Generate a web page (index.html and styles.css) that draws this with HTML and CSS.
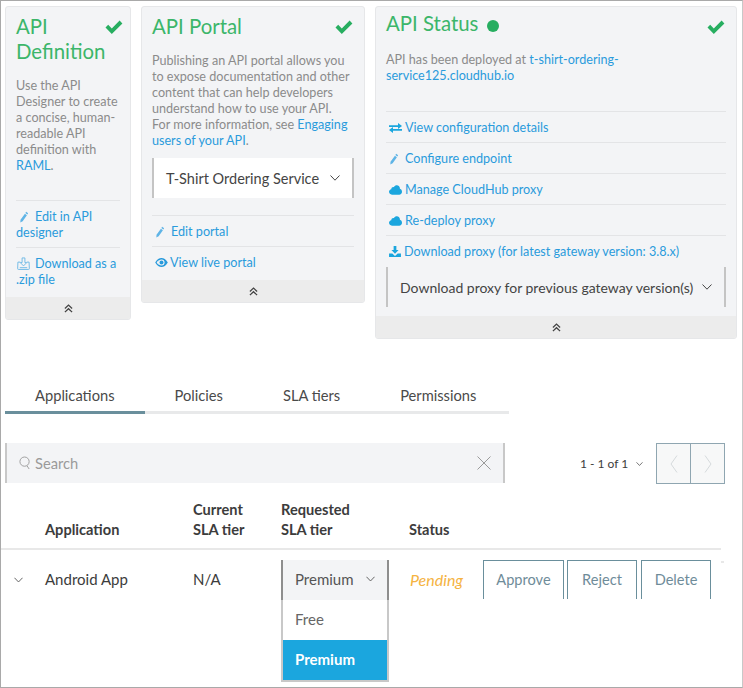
FILE: index.html
```html
<!DOCTYPE html>
<html lang="en">

<head>
    <meta charset="UTF-8">
    <meta name="viewport" content="width=device-width, initial-scale=1.0">
    <title>API Administration</title>
    <link rel="stylesheet" href="styles.css">
</head>

<body>
    <svg class="sprites" width="0" height="0">
        <symbol id="i-check" viewBox="0 0 18 14"><path d="M0.5 7.5 L3.2 4.8 L6.8 8.4 L14.6 0.6 L17.4 3.4 L6.8 14 Z"/></symbol>
        <symbol id="i-pencil" viewBox="0 0 12 14"><path d="M8.6 0.6 L11 2.4 L10 4 L7.6 2.2 Z M7.1 3 L9.5 4.8 L4.4 12 L1.6 13.6 L1.8 10.4 Z"/></symbol>
        <symbol id="i-tray" viewBox="0 0 14 14"><path fill="none" stroke="currentColor" d="M3.5 5.5 H1 L0.7 12.5 Q0.7 13.4 1.6 13.4 H12.4 Q13.3 13.4 13.3 12.5 L13 5.5 H10.5 M5.5 1 H8.5 V6 H10.5 L7 9.6 L3.5 6 H5.5 Z M3 11.5 H11"/></symbol>
        <symbol id="i-eye" viewBox="0 0 14 10"><path fill-rule="evenodd" d="M0 5 C2 1.4 4.4 0 7 0 C9.6 0 12 1.4 14 5 C12 8.6 9.6 10 7 10 C4.4 10 2 8.6 0 5 Z M7 1.6 A3.4 3.4 0 1 0 7 8.4 A3.4 3.4 0 1 0 7 1.6 Z M1.6 5 C2.4 6.2 3.2 7 4.2 7.7 C3.4 6.6 3.4 3.4 4.2 2.3 C3.2 3 2.4 3.8 1.6 5 Z"/><circle cx="7" cy="5" r="2.2"/></symbol>
        <symbol id="i-exchange" viewBox="0 0 13 10"><path d="M0 2.2 H9 V0 L13 3 L9 6 V3.9 H0 Z M13 6.1 H4 V4 L0 7 L4 10 V7.8 H13 Z"/></symbol>
        <symbol id="i-cloud" viewBox="0 0 14 10"><path d="M3.2 10 C1.4 10 0 8.7 0 7 C0 5.5 1 4.4 2.4 4.1 C2.6 2.4 4 1.6 5.2 2 C6 0.7 7.2 0 8.4 0 C10.4 0 11.8 1.5 11.8 3.6 C13.1 4 14 5.3 14 6.8 C14 8.6 12.7 10 11 10 Z"/></symbol>
        <symbol id="i-download" viewBox="0 0 13 12"><path d="M5 0 H8 V4.4 H10.4 L6.5 8.4 L2.6 4.4 H5 Z M0 8.2 H3.6 L6.5 11 L9.4 8.2 H13 V12 H0 Z"/></symbol>
        <symbol id="i-up" viewBox="0 0 10 10"><path fill="none" stroke="currentColor" stroke-width="1.4" d="M1 5 L5 1.2 L9 5 M1 9 L5 5.2 L9 9"/></symbol>
        <symbol id="i-down" viewBox="0 0 10 6"><path fill="none" stroke="currentColor" d="M0.5 0.5 L5 5.2 L9.5 0.5"/></symbol>
        <symbol id="i-left" viewBox="0 0 8 18"><path fill="none" stroke="currentColor" d="M7 0.5 L1 9 L7 17.5"/></symbol>
        <symbol id="i-right" viewBox="0 0 8 18"><path fill="none" stroke="currentColor" d="M1 0.5 L7 9 L1 17.5"/></symbol>
        <symbol id="i-search" viewBox="0 0 13 15"><circle cx="6" cy="6" r="5" fill="none" stroke="currentColor"/><path fill="none" stroke="currentColor" d="M8.6 10.4 L11 14"/></symbol>
        <symbol id="i-close" viewBox="0 0 14 14"><path fill="none" stroke="currentColor" d="M0.5 0.5 L13.5 13.5 M13.5 0.5 L0.5 13.5"/></symbol>
    </svg>

    <div class="page">
        <div class="cards">
            <section class="card card-definition">
                <div class="card-body">
                    <div class="card-head">
                        <h2>API Definition</h2>
                        <svg class="done"><use href="#i-check"/></svg>
                    </div>
                    <p class="intro">Use the API Designer to create a concise, human-readable API definition with <a href="#">RAML</a>.</p>
                    <ul class="links">
                        <li><a href="#"><svg class="ico ico-pencil"><use href="#i-pencil"/></svg>Edit in API designer</a></li>
                        <li><a href="#"><svg class="ico ico-tray"><use href="#i-tray"/></svg>Download as a .zip file</a></li>
                    </ul>
                </div>
                <div class="card-foot"><svg><use href="#i-up"/></svg></div>
            </section>

            <section class="card card-portal">
                <div class="card-body">
                    <div class="card-head">
                        <h2>API Portal</h2>
                        <svg class="done"><use href="#i-check"/></svg>
                    </div>
                    <p class="intro">Publishing an API portal allows you to expose documentation and other content that can help developers understand how to use your API.<br>For more information, see <a href="#">Engaging users of your API</a>.</p>
                    <div class="picker picker-white">
                        <span>T-Shirt Ordering Service</span>
                        <svg class="caret"><use href="#i-down"/></svg>
                    </div>
                    <ul class="links">
                        <li><a href="#"><svg class="ico ico-pencil"><use href="#i-pencil"/></svg>Edit portal</a></li>
                        <li><a href="#"><svg class="ico ico-eye"><use href="#i-eye"/></svg>View live portal</a></li>
                    </ul>
                </div>
                <div class="card-foot"><svg><use href="#i-up"/></svg></div>
            </section>

            <section class="card card-status">
                <div class="card-body">
                    <div class="card-head">
                        <h2>API Status <span class="live"></span></h2>
                        <svg class="done"><use href="#i-check"/></svg>
                    </div>
                    <p class="intro">API has been deployed at <a href="#">t-shirt-ordering-<br>service125.cloudhub.io</a></p>
                    <ul class="links">
                        <li><a href="#"><svg class="ico ico-solid"><use href="#i-exchange"/></svg>View configuration details</a></li>
                        <li><a href="#"><svg class="ico ico-pencil"><use href="#i-pencil"/></svg>Configure endpoint</a></li>
                        <li><a href="#"><svg class="ico ico-solid"><use href="#i-cloud"/></svg>Manage CloudHub proxy</a></li>
                        <li><a href="#"><svg class="ico ico-solid"><use href="#i-cloud"/></svg>Re-deploy proxy</a></li>
                        <li><a href="#"><svg class="ico ico-dl"><use href="#i-download"/></svg>Download proxy (for latest gateway version: 3.8.x)</a></li>
                    </ul>
                    <div class="picker">
                        <span>Download proxy for previous gateway version(s)</span>
                        <svg class="caret"><use href="#i-down"/></svg>
                    </div>
                </div>
                <div class="card-foot"><svg><use href="#i-up"/></svg></div>
            </section>
        </div>

        <nav class="tabs">
            <a class="tab active" href="#">Applications</a>
            <a class="tab" href="#">Policies</a>
            <a class="tab" href="#">SLA tiers</a>
            <a class="tab" href="#">Permissions</a>
        </nav>

        <div class="toolbar">
            <div class="search">
                <svg class="search-ico"><use href="#i-search"/></svg>
                <span class="search-text">Search</span>
                <svg class="search-clear"><use href="#i-close"/></svg>
            </div>
            <div class="pager">
                <span class="count">1 - 1 of 1</span>
                <svg class="count-caret"><use href="#i-down"/></svg>
                <div class="pager-btns">
                    <button><svg><use href="#i-left"/></svg></button>
                    <button><svg><use href="#i-right"/></svg></button>
                </div>
            </div>
        </div>

        <div class="table">
            <div class="row row-head">
                <div></div>
                <div>Application</div>
                <div>Current<br>SLA tier</div>
                <div>Requested<br>SLA tier</div>
                <div>Status</div>
            </div>
            <div class="row row-data">
                <div class="expand"><svg><use href="#i-down"/></svg></div>
                <div class="cell">Android App</div>
                <div class="cell">N/A</div>
                <div class="tier">
                    <div class="tier-value">
                        <span>Premium</span>
                        <svg><use href="#i-down"/></svg>
                    </div>
                    <ul class="tier-menu">
                        <li>Free</li>
                        <li class="selected">Premium</li>
                    </ul>
                </div>
                <div class="cell pending">Pending</div>
                <div class="actions">
                    <button class="btn-approve">Approve</button>
                    <button>Reject</button>
                    <button class="btn-delete">Delete</button>
                </div>
            </div>
            <span class="speck"></span>
        </div>
    </div>
</body>

</html>
```

FILE: styles.css
```css
* {
    box-sizing: border-box;
}

body {
    margin: 0;
    font-family: Lato, "Open Sans", sans-serif;
    font-size: 12.6px;
    color: #3c3c3c;
    background: #fff;
}

a {
    color: #2a9bdc;
    text-decoration: none;
}

ul {
    list-style: none;
    margin: 0;
    padding: 0;
}

.sprites {
    position: absolute;
}

.page {
    height: 688px;
    overflow: hidden;
    border: 1px solid #a9a9a9;
    border-right-color: #c8c8c8;
    padding: 5px 0 0 4px;
}

/* top cards */
.cards {
    display: flex;
    align-items: flex-start;
    gap: 10px;
}

.card {
    background: #f3f4f6;
    border: 1px solid #e6e7e9;
    border-radius: 3px;
    overflow: hidden;
}

.card-definition {
    width: 126px;
}

.card-portal {
    width: 224px;
}

.card-status {
    width: 362px;
}

.card-body {
    padding: 7px 10px 0;
}

.card-head {
    display: flex;
    justify-content: space-between;
    align-items: flex-start;
}

.card-head h2 {
    margin: 0;
    font-size: 20.4px;
    font-weight: 400;
    line-height: 25px;
    color: #3cb66a;
}

.done {
    width: 18px;
    height: 14px;
    margin-top: 6px;
    margin-right: 1px;
    fill: #27ae60;
    flex: none;
}

.live {
    display: inline-block;
    width: 12px;
    height: 12px;
    margin-left: 3px;
    border-radius: 50%;
    background: #27ae60;
}

.intro {
    margin: 14px 0 0;
    line-height: 16px;
    color: #8b8b8b;
}

.links li {
    border-top: 1px solid #e3e4e6;
    padding: 8px 0 6px;
    line-height: 16px;
}

.ico {
    display: inline-block;
    vertical-align: -2px;
    fill: currentColor;
    color: #2a9bdc;
}

.ico-pencil {
    width: 10px;
    height: 12px;
    margin: 0 6px 0 3px;
    color: #5fb4e6;
}

.ico-tray {
    width: 13px;
    height: 13px;
    margin: 0 5px 0 1px;
    color: #6db9e6;
    fill: none;
}

.ico-eye {
    width: 13px;
    height: 9px;
    margin: 0 2px 0 3px;
    vertical-align: 0;
}

.ico-solid {
    width: 13px;
    height: 10px;
    margin: 0 3px 0 3px;
    vertical-align: -1px;
    color: #1ba6de;
}

.ico-dl {
    width: 12px;
    height: 11px;
    margin: 0 3px 0 3px;
    vertical-align: -1px;
    color: #1ba6de;
}

.card-definition .intro {
    min-height: 96px;
    margin-bottom: 26px;
}

.card-definition .links li:last-child {
    padding-bottom: 9px;
}

.card-portal .links {
    margin-top: 17px;
}

.card-portal .links li:last-child {
    padding-bottom: 9px;
}

.card-status .card-head h2 {
    margin-top: -3px;
}

.card-status .card-head h2 .live {
    transform: translateY(1px);
}

.card-status .intro {
    margin: 16px 0 27px;
}

.card-status .links li:last-child {
    padding-bottom: 7px;
}

.picker {
    display: flex;
    justify-content: space-between;
    align-items: center;
    height: 40px;
    padding: 0 12px 0 12px;
    border-left: 2px solid #c4c4c4;
    border-right: 2px solid #c4c4c4;
    font-size: 14px;
    color: #444;
}

.picker-white {
    background: #fff;
    margin-top: 9px;
    font-size: 14.5px;
}

.caret {
    width: 10px;
    height: 6px;
    flex: none;
}

.card-status .picker {
    margin-bottom: 9px;
}

.card-foot {
    display: flex;
    justify-content: center;
    align-items: center;
    height: 22px;
    background: #ececec;
    color: #444;
}

.card-foot svg {
    width: 9px;
    height: 9px;
}

/* tabs */
.tabs {
    display: flex;
    width: 504px;
    height: 30px;
    margin-top: 45px;
    border-bottom: 3px solid #e8e9ea;
}

.tab {
    height: 30px;
    padding: 1px 30px 0;
    font-size: 14.7px;
    line-height: 21px;
    color: #4a4a4a;
}

.tab.active {
    border-bottom: 3px solid #6a8f9c;
}

/* search and pager */
.toolbar {
    display: flex;
    align-items: flex-start;
    margin-top: 29px;
}

.search {
    display: flex;
    align-items: center;
    width: 500px;
    height: 40px;
    padding: 0 12px 0 12px;
    background: #f3f4f6;
    border-left: 2px solid #c8c8c8;
    border-right: 2px solid #c8c8c8;
    color: #9a9a9a;
}

.search-ico {
    width: 12px;
    height: 14px;
    margin-right: 4px;
}

.search-text {
    flex: 1;
    font-size: 14.7px;
}

.search-clear {
    width: 14px;
    height: 14px;
}

.pager {
    display: flex;
    align-items: center;
    height: 41px;
    margin-left: 75px;
}

.count {
    font-size: 12px;
    color: #3c3c3c;
}

.count-caret {
    width: 7px;
    height: 4px;
    margin: 0 13px 0 8px;
    color: #333;
}

.pager-btns {
    display: flex;
    width: 69px;
    height: 41px;
    border: 1px solid #8fa6b1;
}

.pager-btns button {
    flex: 1;
    display: flex;
    justify-content: center;
    align-items: center;
    padding: 0;
    background: #f7f8f8;
    border: 0;
    color: #d5dadc;
}

.pager-btns button + button {
    border-left: 1px solid #8fa6b1;
}

.pager-btns svg {
    width: 8px;
    height: 18px;
}

/* table */
.table {
    position: relative;
    width: 721px;
    margin: 15px 0 0 -5px;
}

.row {
    display: grid;
    grid-template-columns: 45px 148px 88px 128px 1fr;
}

.row-head {
    align-items: end;
    padding-bottom: 8px;
    border-bottom: 2px solid #e8e8e8;
    box-sizing: content-box;
    font-weight: 700;
    font-size: 14.6px;
    line-height: 20px;
    color: #3c3c3c;
    height: 41px;
}

.row-data {
    grid-template-columns: 45px 148px 88px 128px 74px 1fr;
    align-items: center;
    height: 40px;
    margin-top: 10px;
    font-size: 15px;
}

.cell {
    padding-bottom: 2px;
}

.expand svg {
    display: block;
    width: 9px;
    height: 6px;
    margin-left: 14px;
    color: #555;
}

.tier {
    position: relative;
    width: 108px;
    height: 40px;
}

.tier-value {
    display: flex;
    justify-content: space-between;
    align-items: center;
    height: 40px;
    padding: 0 12px 2px 12px;
    background: #f3f4f6;
    border-left: 2px solid #8e8e8e;
    border-right: 2px solid #8e8e8e;
    color: #555;
}

.tier-value svg {
    width: 9px;
    height: 6px;
}

.tier-menu {
    position: absolute;
    top: 40px;
    left: 0;
    width: 108px;
    background: #fff;
    border: 2px solid #c8c8c8;
    border-top: 0;
}

.tier-menu li {
    height: 40px;
    padding-left: 12px;
    line-height: 38px;
    color: #666;
}

.tier-menu .selected {
    background: #1ba6de;
    color: #fff;
    font-weight: 700;
}

.pending {
    padding-left: 1px;
    font-style: italic;
    font-size: 16px;
    color: #f5b342;
}

.actions {
    display: flex;
    gap: 3px;
    height: 40px;
}

.actions button {
    width: 70px;
    height: 39px;
    padding: 0 0 2px;
    background: #fff;
    border: 1px solid #6a8f9c;
    border-bottom: 0;
    font: inherit;
    font-size: 14.6px;
    color: #6f8c99;
}

.actions .btn-approve {
    width: 81px;
}

.actions .btn-delete {
    margin-left: 1px;
}

.speck {
    position: absolute;
    top: 62px;
    right: -3px;
    width: 3px;
    height: 2px;
    background: #e8e8e8;
}
```
